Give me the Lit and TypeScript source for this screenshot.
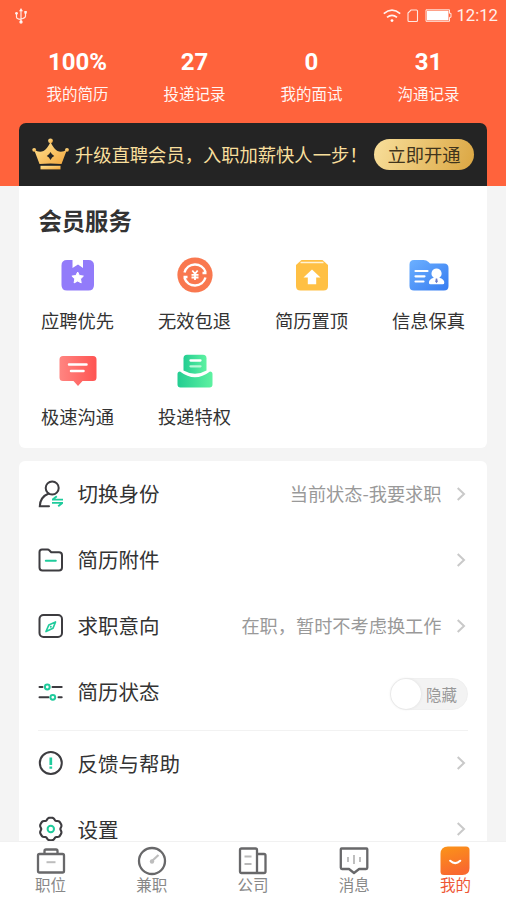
import { LitElement, html, css, svg, TemplateResult } from "lit";
import { customElement } from "lit/decorators.js";

const icon = (w: number, h: number, body: TemplateResult) =>
  html`<svg width=${w} height=${h} viewBox="0 0 ${w} ${h}" fill="none" aria-hidden="true">${body}</svg>`;

const D = "#3d3c40";
const G = "#1fcb9c";
const N = "#68686a";

// Six rounded lobes around a centre, with one lobe pointing up.
const gearPath = (cx: number, cy: number) =>
  Array.from({ length: 72 }, (_, i) => {
    const t = (i * Math.PI) / 36;
    const r = 10.7 + 0.9 * Math.cos(6 * t) - 0.3 * Math.cos(12 * t);
    return `${i ? "L" : "M"}${(cx + r * Math.sin(t)).toFixed(2)} ${(cy - r * Math.cos(t)).toFixed(2)}`;
  }).join("") + "z";

const usb = icon(14, 16, svg`<g stroke="#fff" stroke-opacity=".85" stroke-width="1.2"><path d="M7 2.5V14M2.5 6v3q0 2 4.500 2.500M11.500 5v3q0 2-4.500 3"/></g><g fill="#fff" fill-opacity=".9"><path d="M7 0l2 3.200H5zM10.300 3h2.500v2.500h-2.500z"/><circle cx="2.500" cy="5.300" r="1.400"/><circle cx="7" cy="14" r="1.700"/></g>`);
const wifi = icon(18, 14, svg`<g stroke="#fff" stroke-opacity=".92" stroke-width="1.700"><path d="M.8 4.700q8.200-7 16.400 0M4 8.300q5-4 10 0"/></g><circle cx="9" cy="11.600" r="1.400" fill="#fff"/>`);
const sim = icon(12, 14, svg`<path d="M4 1h5.500q1 0 1 1v9.500q0 1-1 1h-7.500q-1 0-1-1V4z" stroke="#fff" stroke-opacity=".85" stroke-width="1.100"/>`);
const battery = icon(27, 14, svg`<path d="M1 .8h23.500v3.500H26v4h-1.500v4H1z" stroke="#fff" stroke-opacity=".85"/><path d="M2 1.800H23.500v9.500H2z" fill="#fff"/>`);

const crown = icon(38, 32, svg`<defs><linearGradient id="a" x1="0" y1="0" x2="1" y2="1"><stop stop-color="#ffe596"/><stop offset="1" stop-color="#f3a63c"/></linearGradient></defs><g fill="url(#a)"><path d="M2 11.500q5 3.500 9.500 1.500Q15.500 10.500 18.500 4q3 6.500 7 9 4.500 2 9.500-1.500L29.500 26q-11-1.200-22 0z"/><circle cx="18.500" cy="2.800" r="2.400"/><circle cx="2.200" cy="11.800" r="1.900"/><circle cx="35" cy="11.800" r="1.900"/><path d="M8.500 27.800h20v3.600h-20z"/></g><path d="M18.500 14q1.300 2.800 3.700 4-2.400 1.200-3.700 4-1.300-2.800-3.700-4 2.400-1.200 3.700-4z" fill="#242424"/>`);

const priority = icon(34, 34, svg`<path d="M6 2h5.500v8l5.500-3.500L22 10V2h5.500q5.500 0 5.500 5.500V27q0 5.500-5.500 5.500H6Q.5 32.500.5 27V7.500Q.5 2 6 2z" fill="#927bfa"/><path d="M16.700 14l1.700 3.500 4 .6-2.900 2.800.7 4-3.500-1.900-3.600 1.900.7-4-2.900-2.800 4-.6z" fill="#fff" stroke="#fff" stroke-linejoin="round"/>`);
const refund = icon(36, 36, svg`<circle cx="18" cy="18" r="17.600" fill="#f9784f"/><g stroke="#fff"><path d="M7.500 15.500A11 11 0 0 1 28.500 15M28.500 20.500A11 11 0 0 1 7.500 21M25.500 16h4M6.500 20h4" stroke-width="2.400"/><path d="M15.300 13.500l2.700 3.300 2.700-3.300M18 16v7M14.500 17.800h7M14.500 20.500h7" stroke-width="1.800"/></g>`);
const pin = icon(34, 34, svg`<path d="M6.500 2h21L33 7v21q0 4.500-4.500 4.500h-23Q1 32.500 1 28V7z" fill="#ffc044"/><path d="M5.500 4.500h23" stroke="#fff3d6" stroke-width="1.500"/><path d="M17 11.500l8.500 8h-4.300v6.800h-8.400v-6.800H8.500z" fill="#fff"/>`);
const verified = icon(40, 34, svg`<defs><linearGradient id="b" x1="0" y1="0" x2="1" y2="1"><stop stop-color="#6cb0ff"/><stop offset="1" stop-color="#377cf1"/></linearGradient></defs><path d="M5 2h9.500q3 0 5 2l1.500 1.500H35q4.500 0 4.500 4.500v18q0 4.500-4.500 4.500H5q-4.500 0-4.500-4.500V6.500Q.5 2 5 2z" fill="url(#b)"/><path d="M6.500 13h12M6.500 18.300h9M6.500 23.500h8" stroke="#fff" stroke-width="2.200" stroke-linecap="round"/><path d="M27.500 10.500a5 5 0 0 1 2.800 9.200q5 1.300 5 5 0 1.600-1.600 1.600H21.500q-1.600 0-1.600-1.600 0-3.700 4.900-5a5 5 0 0 1 2.700-9.200z" fill="#fff"/><path d="M26.800 20.500h1.400l.5 3-1.200 1.700-1.200-1.700z" fill="#6a78c8"/>`);
const chat = icon(38, 32, svg`<defs><linearGradient id="c" x1="0" y1="0" x2="1" y2="0"><stop stop-color="#ff8581"/><stop offset="1" stop-color="#ff5452"/></linearGradient></defs><path d="M4 1h30q3.500 0 3.500 3.500v18q0 3.500-3.500 3.500H23.500L19 31l-4.500-5H4Q.5 26 .5 22.500v-18Q.5 1 4 1z" fill="url(#c)"/><path d="M10 9.500h17.500M12 16h12.500" stroke="#fff" stroke-width="2.500" stroke-linecap="round"/>`);
const deliver = icon(36, 34, svg`<defs><linearGradient id="d" x1="0" y1="0" x2="1" y2="0"><stop stop-color="#23cd92"/><stop offset="1" stop-color="#5ef2a1"/></linearGradient></defs><path d="M10 .8h16q3.500 0 3.500 3.500v12.200Q18 23 6.500 16.500V4.300Q6.500.8 10 .8z" fill="url(#d)"/><path d="M3 17.500q15 11.500 30 0 2.500 0 2.500 2.500v10.500q0 3-3 3h-29q-3 0-3-3V20q0-2.500 2.500-2.500z" fill="url(#d)"/><path d="M13.500 6.500h10" stroke="#fff" stroke-width="2.300" stroke-linecap="round"/><path d="M13.500 12.300h10" stroke="#b9f8d8" stroke-width="2.300" stroke-linecap="round"/>`);

const identity = icon(26, 28, svg`<g stroke=${D} stroke-width="2" stroke-linecap="round"><circle cx="14.200" cy="8" r="6.500"/><path d="M10.700 13.500Q2 17 1.800 26.300H11"/></g><g stroke=${G} stroke-width="1.900" stroke-linejoin="round"><path d="M14 19.600h11M14 22.900h11M18.800 16.300L14.700 19.600M20.200 26.200l4.100-3.300"/></g>`);
const folder = icon(26, 26, svg`<path d="M4 2.500h5.500q1.200 0 2 1L13.200 5.300H21q3 0 3 3v12.200q0 3-3 3H4.500q-3 0-3-3V5Q1.500 2.500 4 2.500z" stroke=${D} stroke-width="2"/><path d="M7.800 13.700h10" stroke=${G} stroke-width="2" stroke-linecap="round"/>`);
const compass = icon(26, 26, svg`<rect x="1.500" y="2" width="22.500" height="22" rx="4" stroke=${D} stroke-width="2"/><path d="M17.500 9l-2.500 6.300-7 3.200 2.800-6.500z" stroke=${G} stroke-width="1.700" stroke-linejoin="round"/><circle cx="12.800" cy="13.700" r="1" fill=${G}/>`);
const sliders = icon(26, 26, svg`<path d="M1.500 8h3M14.500 8H23.700M1.500 18.300h9M20.500 18.300h3.200" stroke=${D} stroke-width="2" stroke-linecap="round"/><g stroke=${G} stroke-width="2"><circle cx="9.300" cy="8" r="2.400"/><circle cx="14.800" cy="18.300" r="2.400"/></g>`);
const help = icon(26, 26, svg`<circle cx="12.800" cy="13" r="11" stroke=${D} stroke-width="2"/><path d="M12.800 7.500v7.500M12.800 16.500v2.200" stroke=${G} stroke-width="2.700"/>`);
const gear = icon(26, 26, svg`<path d=${gearPath(12.8, 13)} stroke=${D} stroke-width="2.100" stroke-linejoin="round"/><circle cx="12.800" cy="13" r="3.200" stroke=${G} stroke-width="2"/>`);
const chevron = icon(10, 16, svg`<path d="M1.700 2l6.300 6-6.300 6" stroke="#c9c9c9" stroke-width="2"/>`);

const job = icon(30, 30, svg`<g stroke=${N} stroke-width="2.300"><rect x="2" y="8" width="26" height="18.500" rx="1.500"/><path d="M8.500 8V5q0-1.500 1.500-1.500h10q1.500 0 1.500 1.500v3"/></g><path d="M10.500 16.200h9" stroke="#bdbdbd" stroke-width="2"/>`);
const part = icon(30, 30, svg`<circle cx="15" cy="15" r="13" stroke=${N} stroke-width="2.300"/><path d="M15 15l6.500-6" stroke="#bdbdbd" stroke-width="2.200"/><circle cx="15" cy="15.500" r="2.200" fill="#bdbdbd"/>`);
const company = icon(30, 30, svg`<g stroke=${N} stroke-width="2.300"><path d="M3.500 2.500h14q1.500 0 1.500 1.500v23H3.500Q2 27 2 25.500V4q0-1.500 1.500-1.500zM19 8h7q1.500 0 1.500 1.500v16q0 1.500-1.500 1.500H19"/></g><path d="M6.500 10.500h7M6.500 18h7" stroke="#b8b8b8" stroke-width="2"/>`);
const message = icon(30, 30, svg`<path d="M2.500 2.500h25q.8 0 .8.800v18.500q0 1.200-1.200 1.200h-7L15 27l-5-4H3q-1.200 0-1.200-1.200V3.300q0-.8.700-.8z" stroke=${N} stroke-width="2.300" stroke-linejoin="round"/><path d="M9 11v5M15 9v9M21 11v5" stroke="#b8b8b8" stroke-width="1.800"/>`);
const mine = icon(30, 30, svg`<defs><linearGradient id="e" x1="0" y1="0" x2=".3" y2="1"><stop stop-color="#fb9418"/><stop offset="1" stop-color="#f9692f"/></linearGradient></defs><path d="M8 .5h18q3.500 0 3.500 3.500v18q0 7-7 7H4q-3.500 0-3.500-3.500V8Q.5.5 8 .5z" fill="url(#e)"/><path d="M10.200 14.800q5 4.500 10 0" stroke="#fff" stroke-width="2.200" stroke-linecap="round"/>`);

const stats = [["100%", "我的简历"], ["27", "投递记录"], ["0", "我的面试"], ["31", "沟通记录"]];
const services: [TemplateResult, string][] = [
  [priority, "应聘优先"], [refund, "无效包退"], [pin, "简历置顶"],
  [verified, "信息保真"], [chat, "极速沟通"], [deliver, "投递特权"],
];
const tabs: [TemplateResult, string][] = [[job, "职位"], [part, "兼职"], [company, "公司"], [message, "消息"], [mine, "我的"]];

@customElement("app-root")
export class AppRoot extends LitElement {
  static styles = css`
    :host { display: flex; flex-direction: column; height: 900px; overflow: hidden; background: #f4f4f4; color: #333;
      font-family: "Noto Sans CJK SC", sans-serif; font-size: 18.3px; }
    * { box-sizing: border-box; }
    svg { display: block; flex: none; }
    .content { flex: 1; min-height: 0; overflow: hidden; }
    .head { background: #ff633c; height: 185.5px; padding: 0 19px; color: #fff; display: flex; flex-direction: column; }
    .status { height: 32px; display: flex; align-items: center; margin: 0 -11px 0 -5px; gap: 6px; }
    .spacer { flex: 1; }
    .clock { font: 16.7px/32px Roboto, sans-serif; opacity: .9; margin-left: -2px; }
    .stats { display: grid; grid-template-columns: repeat(4, 1fr); text-align: center; height: 91px; padding-top: 15px; }
    .num { font: 700 24px/30px Roboto, sans-serif; }
    .cap { font-size: 15.5px; line-height: 24px; margin-top: 3.5px; opacity: .94; }
    .vip { flex: 1; background: #242424; border-radius: 7px 7px 0 0; display: flex; align-items: center; padding: 0 13px; color: #f8df9c; white-space: nowrap; }
    .pitch { margin-left: 5px; width: 300px; }
    .open { width: 100px; height: 31px; border-radius: 16px; line-height: 30px; text-align: center; color: #40341c;
      background: linear-gradient(110deg, #f8df9b, #dba642); flex: none; }
    .card { background: #fff; margin: 0 19px; }
    .services { height: 262.5px; border-radius: 0 0 6px 6px; }
    .title { font-size: 23.3px; line-height: 34px; font-weight: 700; margin: 0; padding: 17px 20px 0 19.5px; }
    .grid { display: grid; grid-template-columns: repeat(4, 1fr); grid-auto-rows: 96px; padding-top: 20px; }
    .cell { display: flex; flex-direction: column; align-items: center; }
    .pic { height: 36px; display: flex; align-items: center; }
    .cell .name { line-height: 26px; margin-top: 14px; }
    .list { margin-top: 12.5px; border-radius: 6px 6px 0 0; padding: 0 19px; }
    .row { height: 66px; display: flex; align-items: center; }
    .label { font-size: 20.5px; margin-left: 13.5px; flex: 1; padding-bottom: 1px; }
    .value { font-size: 18.2px; color: #999; margin-right: 14px; padding-bottom: 1px; }
    .row .chev { margin-right: 2.5px; }
    .after { border-top: 1px solid #f2f2f2; margin-top: 5px; }
    .after .row { padding-bottom: 1px; }
    .switch { width: 78px; height: 32px; border-radius: 16px; background: #f3f3f3; border: 1px solid #f0f0f0; display: flex; align-items: center;
      color: #999; font-size: 15.5px; gap: 5px; margin-top: 4px; }
    .knob { width: 30px; height: 30px; border-radius: 50%; background: #fff; box-shadow: 0 0 3px #ddd; }
    .tabs { height: 59px; background: #fff; border-top: 1px solid #f1f1f1; display: grid; grid-template-columns: repeat(5, 1fr); }
    .tab { display: flex; flex-direction: column; align-items: center; font-size: 15.5px; line-height: 22px; color: #888; padding-top: 4px; }
    .tab.on { color: #ee5735; }
    .tab .name { margin-top: -3px; }
  `;

  private row(pic: TemplateResult, label: string, value = "") {
    return html`<div class="row">${pic}<span class="label">${label}</span><span class="value">${value}</span><span class="chev">${chevron}</span></div>`;
  }

  render() {
    return html`
      <div class="content">
        <header class="head">
          <div class="status">${usb}<span class="spacer"></span>${wifi}${sim}${battery}<span class="clock">12:12</span></div>
          <div class="stats">${stats.map(([n, c]) => html`<div><div class="num">${n}</div><div class="cap">${c}</div></div>`)}</div>
          <div class="vip">${crown}<span class="pitch">升级直聘会员，入职加薪快人一步！</span><span class="open">立即开通</span></div>
        </header>
        <section class="card services">
          <h2 class="title">会员服务</h2>
          <div class="grid">${services.map(([p, n]) => html`<div class="cell"><div class="pic">${p}</div><span class="name">${n}</span></div>`)}</div>
        </section>
        <section class="card list">
          ${this.row(identity, "切换身份", "当前状态-我要求职")}
          ${this.row(folder, "简历附件")}
          ${this.row(compass, "求职意向", "在职，暂时不考虑换工作")}
          <div class="row">${sliders}<span class="label">简历状态</span><div class="switch"><span class="knob"></span>隐藏</div></div>
          <div class="after">${this.row(help, "反馈与帮助")}${this.row(gear, "设置")}</div>
        </section>
      </div>
      <nav class="tabs">${tabs.map(([p, n], i) => html`<div class="tab ${i === 4 ? "on" : ""}">${p}<span class="name">${n}</span></div>`)}</nav>
    `;
  }
}
